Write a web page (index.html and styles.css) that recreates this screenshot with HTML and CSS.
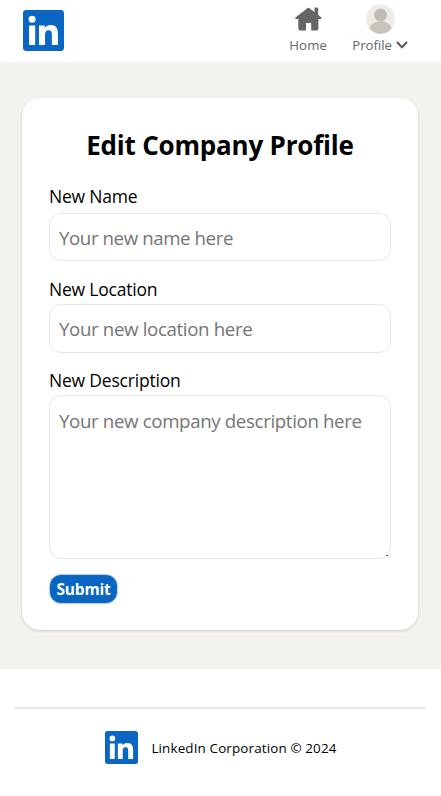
FILE: index.html
```html
<!DOCTYPE html>
<html lang="en">
<head>
<meta charset="utf-8">
<meta name="viewport" content="width=device-width, initial-scale=1">
<title>Edit Company Profile</title>
<link rel="stylesheet" href="styles.css">
</head>
<body>
<svg width="0" height="0" class="defs" aria-hidden="true">
  <symbol id="logo" viewBox="0 0 24 24"><path d="M20.447 20.452h-3.554v-5.569c0-1.328-.027-3.037-1.852-3.037-1.853 0-2.136 1.445-2.136 2.939v5.667H9.351V9h3.414v1.561h.046c.477-.9 1.637-1.85 3.37-1.85 3.601 0 4.267 2.37 4.267 5.455v6.286zM5.337 7.433a2.062 2.062 0 01-2.063-2.065 2.064 2.064 0 112.063 2.065zm1.782 13.019H3.555V9h3.564v11.452zM22.225 0H1.771C.792 0 0 .774 0 1.729v20.542C0 23.227.792 24 1.771 24h20.451C23.2 24 24 23.227 24 22.271V1.729C24 .774 23.2 0 22.222 0h.003z"/></symbol>
</svg>
<header class="header">
  <svg class="logo"><use href="#logo"/></svg>
  <nav class="nav">
    <a class="nav-item home">
      <svg class="home-icon" viewBox="0 0 27 24"><path d="M12 1.4Q13.4 .2 14.8 1.4L19.5 5.1V1.6Q19.5 .6 20.5 .6H22.2Q23.2 .6 23.2 1.6V8L26.4 10.6V12H23.4V21.5Q23.4 23.4 21.5 23.4H16.2V16H11V23.4H5.2Q3.3 23.4 3.3 21.5V12H.4V10.6Z" fill="#666"/></svg>
      <span class="home-text">Home</span>
    </a>
    <a class="nav-item profile">
      <svg class="avatar" viewBox="0 0 29 30"><clipPath id="c"><ellipse cx="14.5" cy="15" rx="14.3" ry="14.7"/></clipPath><g clip-path="url(#c)"><path fill="#efece6" d="M0 0h29v30H0z"/><ellipse cx="14.5" cy="26" rx="11.3" ry="8.9" fill="#c7c4bc"/><circle cx="14.5" cy="11" r="6.4" fill="#bebbb4"/></g></svg>
      <span class="profile-row"><span class="profile-text">Profile</span><svg class="chevron" viewBox="0 0 12 8"><path d="M1 1L6 6.4L11 1" fill="none" stroke="#555" stroke-width="1.9"/></svg></span>
    </a>
  </nav>
</header>
<main class="main">
  <form class="card">
    <h1>Edit Company Profile</h1>
    <label for="name">New Name</label>
    <input id="name" type="text" placeholder="Your new name here">
    <label for="location">New Location</label>
    <input id="location" type="text" placeholder="Your new location here">
    <label for="description">New Description</label>
    <div class="area">
      <textarea id="description" placeholder="Your new company description here"></textarea>
      <span class="grip"></span>
    </div>
    <button type="button">Submit</button>
  </form>
</main>
<footer class="footer">
  <svg class="footer-logo"><use href="#logo"/></svg>
  <span class="footer-text">LinkedIn Corporation © 2024</span>
</footer>
</body>
</html>
```
FILE: styles.css
```css
* { box-sizing: border-box; }
body {
  margin: 0;
  background: #fff;
  color: #000;
  font-family: "Segoe UI", "Open Sans", "Noto Sans", sans-serif;
}
.defs { position: absolute; }
.header {
  display: flex;
  justify-content: space-between;
  height: 63px;
  padding: 0 33px 0 23px;
  border-bottom: 2px solid #f9f9f8;
}
.logo { width: 41px; height: 41px; margin-top: 10px; fill: #0a66c2; }
.nav { display: flex; gap: 25px; color: #666; font-size: 13.2px; line-height: 18px; }
.nav-item { display: flex; flex-direction: column; align-items: center; white-space: nowrap; }
.home-text { letter-spacing: .2px; }
.home-icon { width: 27px; height: 24px; margin: 7px 0 5px; }
.avatar { width: 29px; height: 30px; margin: 4px 0 2px; }
.profile-row { display: flex; align-items: center; gap: 4px; }
.chevron { width: 12px; height: 8px; }
.main { height: 606px; padding: 35px 23px 0 22px; background: #f3f2ee; }
.card {
  display: flex;
  flex-direction: column;
  height: 532px;
  padding: 26px 27px;
  border-radius: 18px;
  background: #fff;
  box-shadow: 0 1px 3px rgba(0, 0, 0, .16);
}
h1 {
  margin: 0 0 18px;
  text-align: center;
  font-size: 26px;
  line-height: 42px;
  font-weight: 700;
  letter-spacing: -.2px;
  white-space: nowrap;
}
label { height: 27px; font-size: 17.5px; line-height: 25px; letter-spacing: -.2px; }
label[for="name"] { height: 29px; }
input, textarea {
  display: block;
  width: 342px;
  margin: 0;
  padding: 0 9px;
  border: 1px solid #dfe8f2;
  border-radius: 12px;
  background: #fff;
  font-family: inherit;
  font-size: 18.7px;
  letter-spacing: -.36px;
  outline: 0;
}
input { height: 48px; margin-bottom: 16px; padding-top: 1px; }
#name { letter-spacing: -.42px; }
#location { height: 49px; margin-bottom: 15px; padding: 0 9px 1px; }
.area { position: relative; height: 164px; margin-bottom: 15px; }
textarea { height: 164px; padding-top: 12px; line-height: 26px; resize: none; }
.grip { position: absolute; right: 3px; bottom: 3px; width: 2px; height: 1px; background: #555; }
input::placeholder, textarea::placeholder { color: #757575; opacity: 1; }
button {
  width: 69px;
  height: 30px;
  padding: 0;
  border: 1px solid #bcd5ed;
  border-radius: 12px;
  background: #0a66c2;
  color: #fff;
  font-family: inherit;
  font-size: 15.5px;
  font-weight: 700;
  letter-spacing: -.2px;
}
.footer {
  display: flex;
  align-items: center;
  justify-content: center;
  gap: 13px;
  height: 80px;
  margin: 38px 15px 0 14px;
  padding-left: 2px;
  border-top: 2px solid #e9e9e9;
}
.footer-logo { width: 33px; height: 33px; margin-bottom: 2px; fill: #0a66c2; }
.footer-text { margin-bottom: 1px; font-size: 13.4px; letter-spacing: .15px; white-space: nowrap; }
```
